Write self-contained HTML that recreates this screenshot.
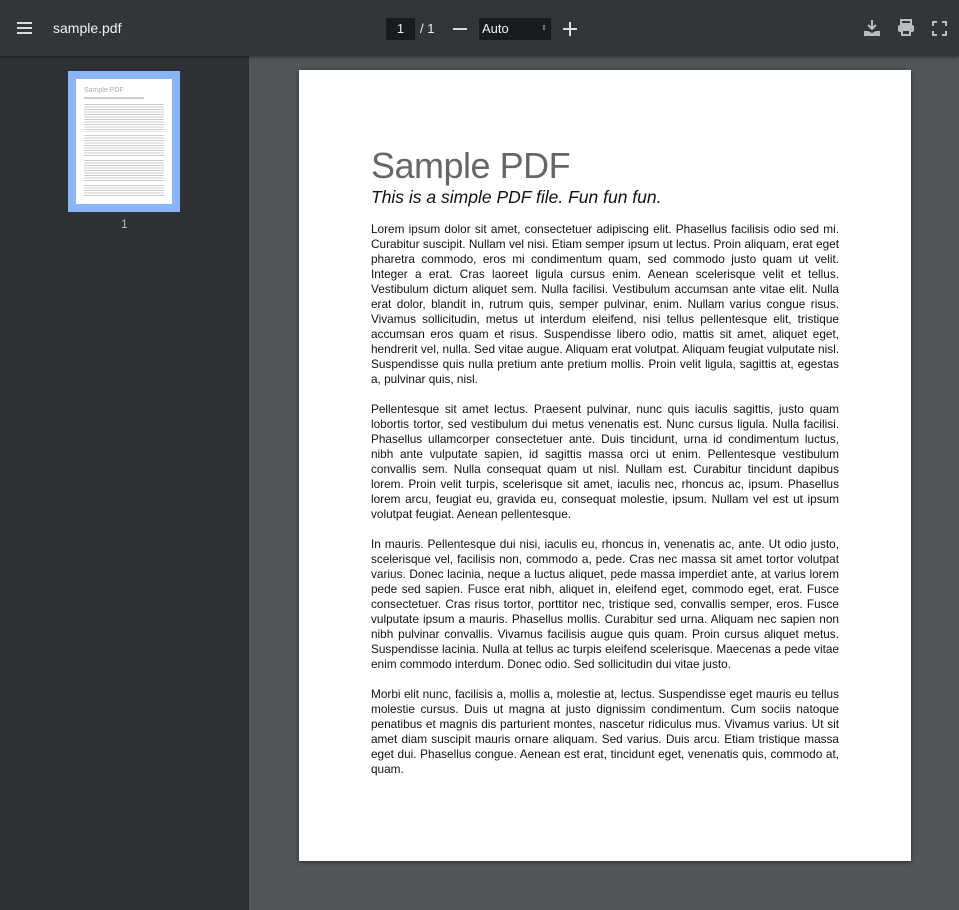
<!DOCTYPE html>
<html><head><meta charset="utf-8"><style>
*{margin:0;padding:0;box-sizing:border-box}
body{width:959px;height:910px;overflow:hidden;background:#525659;font-family:"Liberation Sans",sans-serif;position:relative}
.tb{position:absolute;left:0;top:0;width:959px;height:56px;background:#323639;box-shadow:0 1px 3px rgba(0,0,0,.5);z-index:2;color:#f1f1f1}
.side{position:absolute;left:0;top:56px;width:249px;height:854px;background:#2f3235}
.thumb{position:absolute;left:68px;top:15px;width:112px;height:141px;background:#8ab4f8}
.tw{position:absolute;left:8px;top:8px;background:#fff;width:96px;height:125px}
.ln{position:absolute;left:8px;width:80px;background:repeating-linear-gradient(#ccc 0 1px,#fff 1px 2.5px)}
.page{position:absolute;left:299px;top:70px;width:612px;height:791px;background:#fff;box-shadow:0 1px 4px rgba(0,0,0,.5)}
.content{position:absolute;left:72px;top:76px;width:468px}
h1{font-size:36px;color:#666;letter-spacing:-0.5px;font-weight:normal;line-height:40px}
h2{font-style:italic;font-weight:normal;font-size:17.5px;color:#111;line-height:22px}
p{font-size:11.8px;line-height:15px;text-align:justify;color:#111;margin-top:14px}
p+p{margin-top:15px}
.ic{position:absolute}
</style></head><body>
<div class="tb">
<svg class="ic" style="left:17px;top:21px" width="16" height="14"><rect y="1" width="15" height="2" fill="#ddd"/><rect y="6" width="15" height="2" fill="#ddd"/><rect y="11" width="15" height="2" fill="#ddd"/></svg>
<div style="position:absolute;left:53px;top:20px;font-size:14px">sample.pdf</div>
<div style="position:absolute;left:386px;top:18px;width:29px;height:22px;background:#191b1c;font-size:13px;text-align:center;line-height:22px">1</div>
<div style="position:absolute;left:420px;top:21px;font-size:13px">/ 1</div>
<div style="position:absolute;left:453px;top:28px;width:14px;height:1.5px;background:#ddd"></div>
<div style="position:absolute;left:479px;top:18px;width:72px;height:22px;background:#191b1c;font-size:13px;line-height:22px;padding-left:3px">Auto<span style="position:absolute;right:4px;top:0;font-size:7px;color:#aaa">⇕</span></div>
<div style="position:absolute;left:563px;top:28px;width:14px;height:1.5px;background:#ddd"></div>
<div style="position:absolute;left:569.3px;top:21.5px;width:1.5px;height:14px;background:#ddd"></div>
<svg class="ic" style="left:863px;top:19px" width="18" height="18"><path d="M9 1v9M5 6l4 4 4-4" stroke="#bbb" stroke-width="2" fill="none"/><path d="M1 12h4l4 2 4-2h4v5H1z" fill="#bbb"/></svg>
<svg class="ic" style="left:897px;top:19px" width="18" height="18"><rect x="4" y="1" width="10" height="4" fill="none" stroke="#bbb" stroke-width="2"/><rect x="1" y="6" width="16" height="7" rx="2" fill="#bbb"/><rect x="5" y="11" width="8" height="5" fill="#323639" stroke="#bbb" stroke-width="2"/></svg>
<svg class="ic" style="left:932px;top:21px" width="15" height="15"><path d="M1 5V1h4M10 1h4v4M14 10v4h-4M5 14H1v-4" stroke="#bbb" stroke-width="2" fill="none"/></svg>
</div>
<div class="side">
<div class="thumb"><div class="tw">
<div style="position:absolute;left:8px;top:8px;font-size:7px;color:#aaa">Sample PDF</div>
<div style="position:absolute;left:8px;top:18px;width:60px;height:2px;background:#ccc"></div>
<div class="ln" style="top:25px;height:28px"></div>
<div class="ln" style="top:56px;height:22px"></div>
<div class="ln" style="top:81px;height:22px"></div>
<div class="ln" style="top:106px;height:12px"></div>
</div></div>
<div style="position:absolute;left:121px;top:161px;font-size:12px;color:#bbb">1</div>
</div>
<div class="page"><div class="content">
<h1>Sample PDF</h1>
<h2>This is a simple PDF file. Fun fun fun.</h2>
<p>Lorem ipsum dolor sit amet, consectetuer adipiscing elit. Phasellus facilisis odio sed mi. Curabitur suscipit. Nullam vel nisi. Etiam semper ipsum ut lectus. Proin aliquam, erat eget pharetra commodo, eros mi condimentum quam, sed commodo justo quam ut velit. Integer a erat. Cras laoreet ligula cursus enim. Aenean scelerisque velit et tellus. Vestibulum dictum aliquet sem. Nulla facilisi. Vestibulum accumsan ante vitae elit. Nulla erat dolor, blandit in, rutrum quis, semper pulvinar, enim. Nullam varius congue risus. Vivamus sollicitudin, metus ut interdum eleifend, nisi tellus pellentesque elit, tristique accumsan eros quam et risus. Suspendisse libero odio, mattis sit amet, aliquet eget, hendrerit vel, nulla. Sed vitae augue. Aliquam erat volutpat. Aliquam feugiat vulputate nisl. Suspendisse quis nulla pretium ante pretium mollis. Proin velit ligula, sagittis at, egestas a, pulvinar quis, nisl.</p>
<p>Pellentesque sit amet lectus. Praesent pulvinar, nunc quis iaculis sagittis, justo quam lobortis tortor, sed vestibulum dui metus venenatis est. Nunc cursus ligula. Nulla facilisi. Phasellus ullamcorper consectetuer ante. Duis tincidunt, urna id condimentum luctus, nibh ante vulputate sapien, id sagittis massa orci ut enim. Pellentesque vestibulum convallis sem. Nulla consequat quam ut nisl. Nullam est. Curabitur tincidunt dapibus lorem. Proin velit turpis, scelerisque sit amet, iaculis nec, rhoncus ac, ipsum. Phasellus lorem arcu, feugiat eu, gravida eu, consequat molestie, ipsum. Nullam vel est ut ipsum volutpat feugiat. Aenean pellentesque.</p>
<p>In mauris. Pellentesque dui nisi, iaculis eu, rhoncus in, venenatis ac, ante. Ut odio justo, scelerisque vel, facilisis non, commodo a, pede. Cras nec massa sit amet tortor volutpat varius. Donec lacinia, neque a luctus aliquet, pede massa imperdiet ante, at varius lorem pede sed sapien. Fusce erat nibh, aliquet in, eleifend eget, commodo eget, erat. Fusce consectetuer. Cras risus tortor, porttitor nec, tristique sed, convallis semper, eros. Fusce vulputate ipsum a mauris. Phasellus mollis. Curabitur sed urna. Aliquam nec sapien non nibh pulvinar convallis. Vivamus facilisis augue quis quam. Proin cursus aliquet metus. Suspendisse lacinia. Nulla at tellus ac turpis eleifend scelerisque. Maecenas a pede vitae enim commodo interdum. Donec odio. Sed sollicitudin dui vitae justo.</p>
<p>Morbi elit nunc, facilisis a, mollis a, molestie at, lectus. Suspendisse eget mauris eu tellus molestie cursus. Duis ut magna at justo dignissim condimentum. Cum sociis natoque penatibus et magnis dis parturient montes, nascetur ridiculus mus. Vivamus varius. Ut sit amet diam suscipit mauris ornare aliquam. Sed varius. Duis arcu. Etiam tristique massa eget dui. Phasellus congue. Aenean est erat, tincidunt eget, venenatis quis, commodo at, quam.</p>
</div></div>
</body></html>
